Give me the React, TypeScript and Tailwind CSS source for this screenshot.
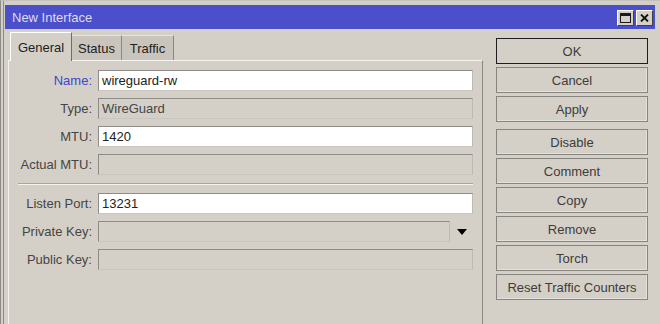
import React from "react";

const fieldBase =
  "h-[21px] border border-[#8e8c88] border-b-[#c9c6c0] border-r-[#bdbab4] px-[3px] flex items-center text-[13px] text-[#222] leading-none";

function Field({ value, disabled }: { value?: string; disabled?: boolean }) {
  return (
    <div className={`${fieldBase} ${disabled ? "bg-[#d4d0c8] text-[#444]" : "bg-white"}`}>
      {value}
    </div>
  );
}

function Label({ text, blue }: { text: string; blue?: boolean }) {
  return (
    <div className={`h-[21px] flex items-center justify-end text-[13px] leading-none ${blue ? "text-[#4044d0]" : "text-[#454545]"}`}>
      {text}
    </div>
  );
}

function Btn({ text, def }: { text: string; def?: boolean }) {
  return (
    <div
      className={`h-[26px] flex items-center justify-center text-[13px] leading-none text-[#3c3c3c] bg-[#d4d0c8] border ${
        def ? "border-[#1e1e1e]" : "border-[#86847f] shadow-[inset_-1px_-1px_0_#e4e2dd]"
      }`}
    >
      {text}
    </div>
  );
}

export default function App() {
  return (
    <div className="w-[660px] h-[324px] overflow-hidden bg-[#d4d0c8] font-['Liberation_Sans',Arial,sans-serif] flex flex-col pt-[4px] pl-[4px] pr-[5px] border-l border-[#8c8a86] border-t border-t-[#c4c2bd] shadow-[inset_2px_0_0_#d4d0c8,inset_3px_0_0_#8c8a86]">
      {/* Title bar */}
      <div className="h-[24px] bg-[#4b4fc9] flex items-center justify-between pl-[7px] pr-[2px]">
        <span className="text-[13px] leading-none text-[#dcdcf6] mt-[1px]">New Interface</span>
        <div className="flex gap-[2px] mt-[1px]">
          <div className="w-[17px] h-[16px] bg-[#d4d0c8] border border-t-white border-l-white border-r-[#404040] border-b-[#404040] flex items-center justify-center">
            <div className="w-[11px] h-[10px] border border-[#1a1a1a] border-t-[3px]" />
          </div>
          <div className="w-[17px] h-[16px] bg-[#d4d0c8] border border-t-white border-l-white border-r-[#404040] border-b-[#404040] flex items-center justify-center">
            <svg width="9" height="8" viewBox="0 0 9 8">
              <path d="M1 0.5 L8 7.5 M8 0.5 L1 7.5" stroke="#111" strokeWidth="1.8" />
            </svg>
          </div>
        </div>
      </div>

      {/* Body */}
      <div className="flex flex-1 mt-[3px]">
        {/* Left tabs + panel */}
        <div className="ml-[3px] w-[475px] flex flex-col">
          <div className="h-[28px] flex items-end pl-[2px] relative z-10">
            <div className="h-[29px] -mb-[1px] w-[62px] bg-[#d4d0c8] border-t border-l border-white border-r border-r-[#6f6d69] flex items-center justify-center text-[13px] leading-none text-[#222] pt-[1px]">
              General
            </div>
            <div className="h-[25px] w-[50px] bg-[#c9c5bd] border-t border-t-[#e6e4df] border-r border-r-[#8a8884] flex items-center justify-center text-[13px] leading-none text-[#222]">
              Status
            </div>
            <div className="h-[25px] w-[52px] bg-[#c9c5bd] border-t border-t-[#e6e4df] border-r border-r-[#8a8884] flex items-center justify-center text-[13px] leading-none text-[#222]">
              Traffic
            </div>
          </div>
          <div className="flex-1 border-t border-l border-[#f4f3f0] border-r border-r-[#8a8884] pt-[9px] pl-0 pr-[9px]">
            <div className="grid grid-cols-[83px_1fr] gap-x-[6px] gap-y-[7px]">
              <Label text="Name:" blue />
              <Field value="wireguard-rw" />
              <Label text="Type:" />
              <Field value="WireGuard" disabled />
              <Label text="MTU:" />
              <Field value="1420" />
              <Label text="Actual MTU:" />
              <Field disabled />
            </div>
            <div className="ml-[9px] my-[8px] h-[2px] border-t border-[#a9a6a0] border-b border-b-[#f4f3f0]" />
            <div className="grid grid-cols-[83px_1fr] gap-x-[6px] gap-y-[7px]">
              <Label text="Listen Port:" />
              <Field value="13231" />
              <Label text="Private Key:" />
              <div className="flex items-center">
                <div className="flex-1">
                  <Field disabled />
                </div>
                <div className="w-[23px] flex justify-center">
                  <div className="w-0 h-0 border-l-[5px] border-r-[5px] border-t-[6px] border-l-transparent border-r-transparent border-t-black" />
                </div>
              </div>
              <Label text="Public Key:" />
              <Field disabled />
            </div>
          </div>
        </div>

        {/* Right buttons */}
        <div className="ml-[13px] w-[152px] pt-[6px] flex flex-col">
          <div className="flex flex-col gap-[3px]">
            <Btn text="OK" def />
            <Btn text="Cancel" />
            <Btn text="Apply" />
          </div>
          <div className="flex flex-col gap-[3px] mt-[7px]">
            <Btn text="Disable" />
            <Btn text="Comment" />
            <Btn text="Copy" />
            <Btn text="Remove" />
            <Btn text="Torch" />
            <Btn text="Reset Traffic Counters" />
          </div>
        </div>
      </div>
    </div>
  );
}
